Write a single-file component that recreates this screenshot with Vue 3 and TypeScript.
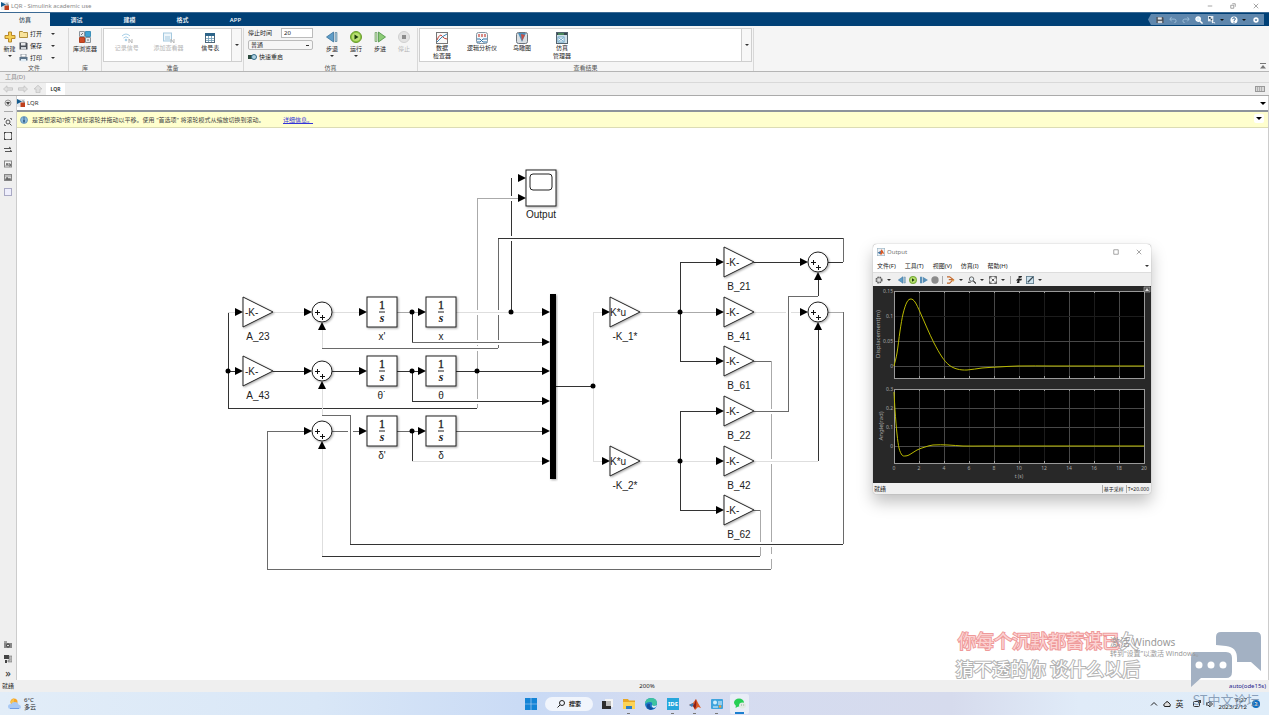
<script setup lang="ts">
import { ref } from 'vue'

type Pt = [number, number]

const tabs = ['仿真', '调试', '建模', '格式', 'APP']
const activeTab = ref('仿真')
const stopTime = ref('20')
const mode = ref('普通')

const fileItems = [
  { icon: 'folder', text: '打开' },
  { icon: 'save', text: '保存' },
  { icon: 'print', text: '打印' },
]
const prepItems = [
  { icon: 'wifi', text: '记录信号', off: true },
  { icon: 'viewer', text: '添加查看器', off: true },
  { icon: 'table', text: '信号表', off: false },
]
const simItems = [
  { icon: 'back', text: '步退', menu: true, off: false },
  { icon: 'run', text: '运行', menu: true, off: false },
  { icon: 'forward', text: '步进', menu: false, off: false },
  { icon: 'stop', text: '停止', menu: false, off: true },
]
const resultItems = [
  { icon: 'inspect', lines: ['数据', '检查器'] },
  { icon: 'logic', lines: ['逻辑分析仪'] },
  { icon: 'bird', lines: ['鸟瞰图'] },
  { icon: 'manager', lines: ['仿真', '管理器'] },
]
const railTop = ['zoomfit', 'fit', 'arrows', 'label', 'image', 'area']
const railBottom = ['camera', 'tree']
const menus = ['文件(F)', '工具(T)', '视图(V)', '仿真(I)', '帮助(H)']

const gains = [
  { x: 243, y: 312, k: '-K-', name: 'A_23' },
  { x: 243, y: 371, k: '-K-', name: 'A_43' },
  { x: 610, y: 312, k: 'K*u', name: '-K_1*' },
  { x: 610, y: 461, k: 'K*u', name: '-K_2*' },
  { x: 724, y: 262, k: '-K-', name: 'B_21' },
  { x: 724, y: 312, k: '-K-', name: 'B_41' },
  { x: 724, y: 361, k: '-K-', name: 'B_61' },
  { x: 724, y: 411, k: '-K-', name: 'B_22' },
  { x: 724, y: 461, k: '-K-', name: 'B_42' },
  { x: 724, y: 510, k: '-K-', name: 'B_62' },
]
const integrators = [
  { x: 367, y: 312, name: "x'" },
  { x: 426, y: 312, name: 'x' },
  { x: 367, y: 371, name: 'θ˙' },
  { x: 426, y: 371, name: 'θ' },
  { x: 367, y: 431, name: "δ'" },
  { x: 426, y: 431, name: 'δ' },
]
const sums: Pt[] = [[322, 312], [322, 371], [322, 431], [818, 262], [818, 312]]

// Wires that are interrupted where another wire crosses them
const brokenWires = [
  { d: 'M477 408V198', tone: 'soft' },
  { d: 'M511 312V178', tone: 'dark' },
  { d: 'M498 348V238', tone: 'mid' },
  { d: 'M771 361V569', tone: 'soft' },
  { d: 'M760 510V556', tone: 'soft' },
  { d: 'M332 431H360', tone: 'mid' },
  { d: 'M754 312H802', tone: 'faint' },
]
const gaps: Pt[] = [
  [511, 198], [511, 238], [477, 312], [477, 342], [477, 348], [477, 401],
  [498, 312], [498, 342], [771, 411], [771, 461], [771, 544], [771, 556],
  [760, 544], [350, 431], [788, 312],
]
const wires = [
  { d: 'M228 312V408H477', tone: 'dark' },
  { d: 'M228 312H236M273 312H305M332 312H360M456 312H543', tone: 'faint' },
  { d: 'M397 312H420', tone: 'soft' },
  { d: 'M477 198H520', tone: 'soft' },
  { d: 'M412 312V342', tone: 'dark' },
  { d: 'M412 342H545M322 348H498', tone: 'mid' },
  { d: 'M322 328V348M322 388V415M322 448V556', tone: 'faint' },
  { d: 'M498 238H843M828 262H843', tone: 'dark' },
  { d: 'M843 238V262M843 312V544', tone: 'mid' },
  { d: 'M228 371H237M273 371H306M332 371H361M397 371H420M456 371H544M412 371V401H544', tone: 'dark' },
  { d: 'M322 415H350V544', tone: 'mid' },
  { d: 'M350 544H843M322 556H760', tone: 'dark' },
  { d: 'M828 312H843', tone: 'soft' },
  { d: 'M306 431H267V569H771M397 431H420M456 431H544', tone: 'mid' },
  { d: 'M412 431V461', tone: 'dark' },
  { d: 'M412 461H543M593 312V461H602M593 312H602M640 461H716M754 461H818', tone: 'faint' },
  { d: 'M556 386H593', tone: 'dark' },
  { d: 'M640 312H718', tone: 'soft' },
  { d: 'M718 262H680V361H718M754 262H802M718 411H680V510H718', tone: 'dark' },
  { d: 'M754 361H771M754 411H788V296H818M754 510H760', tone: 'mid' },
  { d: 'M818 296V278M818 461V328', tone: 'dark' },
]
const rightArrows: Pt[] = [
  [243, 312], [243, 371], [312, 312], [312, 371], [312, 431], [367, 312], [367, 371], [367, 431],
  [426, 312], [426, 371], [426, 431], [550, 312], [550, 342], [550, 371], [550, 401], [550, 431],
  [550, 461], [526, 178], [526, 198], [610, 312], [610, 461], [724, 262], [724, 312], [724, 361],
  [724, 411], [724, 461], [724, 510], [808, 262], [808, 312],
]
const upArrows: Pt[] = [[322, 322], [322, 381], [322, 441], [818, 272], [818, 322]]
const dots: Pt[] = [
  [228, 371], [412, 312], [412, 371], [412, 431], [511, 312], [477, 371], [593, 386], [680, 312], [680, 461],
]

// Cubic Hermite curve through samples with uneven x spacing
function smooth(p: Pt[]): string {
  const slope = p.map((_, i) => {
    const a = p[Math.max(i - 1, 0)]
    const b = p[Math.min(i + 1, p.length - 1)]
    return (b[1] - a[1]) / (b[0] - a[0])
  })
  let d = `M${p[0][0]} ${p[0][1]}`
  for (let i = 0; i < p.length - 1; i++) {
    const [x0, y0] = p[i]
    const [x1, y1] = p[i + 1]
    const h = (x1 - x0) / 3
    d += `C${x0 + h} ${y0 + slope[i] * h} ${x1 - h} ${y1 - slope[i + 1] * h} ${x1} ${y1}`
  }
  return d
}
const displacement = smooth([
  [21, 80], [24, 67], [27, 45], [30, 28], [34, 16], [38, 13], [42, 16], [47, 26], [54, 42], [61, 57],
  [69, 71], [76, 79], [84, 83], [94, 84], [109, 82], [125, 81], [145, 80], [180, 80], [271, 80],
])
const angle = smooth([
  [21, 106], [22, 124], [24, 148], [26, 162], [29, 169], [32, 170], [36, 169], [44, 164], [52, 161],
  [60, 159], [75, 159], [90, 160], [110, 160], [271, 160],
])
const xTicks = Array.from({ length: 11 }, (_, i) => ({ x: 21 + i * 25, label: i * 2 }))
const bright = [2, 4, 8, 14, 18]
const yTop = [{ y: 5, t: '0.15' }, { y: 30, t: '0.1' }, { y: 55, t: '0.05' }, { y: 80, t: '0' }]
const yBottom = [{ y: 103, t: '0.3' }, { y: 122, t: '0.2' }, { y: 141, t: '0.1' }, { y: 160, t: '0' }]
</script>

<template>
  <svg class="defs" aria-hidden="true">
    <symbol id="model" viewBox="0 0 8 8"><rect x="0" y="0" width="8" height="8" fill="#e4e8ec" /><path d="M0 0L5 2.5L0 5Z" fill="#135b8e" /><rect x="3.5" y="3.500" width="4.500" height="4.500" fill="#c0401c" /><path d="M5 2h2v2" stroke="#555" stroke-width=".6" fill="none" /></symbol>
    <symbol id="plus" viewBox="0 0 12 12"><path d="M4.500 1h3v3.500H11v3H7.500V11h-3V7.500H1v-3h3.500z" fill="#f5cf52" stroke="#b9892b" /></symbol>
    <symbol id="folder" viewBox="0 0 9 8"><path d="M.5 1.500h3l1 1h4v5h-8z" fill="#f8e39b" stroke="#b3923f" /></symbol>
    <symbol id="save" viewBox="0 0 9 8"><path d="M.5.5h7l1 1v6h-8z" fill="#4a4f57" /><rect x="2" y="1" width="4.500" height="2.500" fill="#e6e8ea" /><rect x="2" y="5" width="5" height="2.500" fill="#cfd3d8" /></symbol>
    <symbol id="print" viewBox="0 0 9 8"><rect x="2" y="0" width="5" height="3" fill="#fff" stroke="#6c7680" stroke-width=".7" /><rect x=".5" y="3" width="8" height="3.500" fill="#5d7489" /><rect x="2" y="5" width="5" height="2.500" fill="#e1edf5" /></symbol>
    <symbol id="library" viewBox="0 0 12 12"><path d="M.5.5h5v5h-5zM6.500 6.500h5v5h-5z" fill="#e5e9ec" stroke="#8a949c" /><path d="M6.500.5h5v5h-5z" fill="#3fa3d4" stroke="#3b8fb8" /><path d="M.5 6.500h5v5h-5z" fill="#cf4a24" stroke="#b04020" /><path d="M2 4l2-2M8 9h2" stroke="#555" stroke-width=".8" /></symbol>
    <symbol id="wifi" viewBox="0 0 12 12"><path d="M1 4q4-4 8 0M2.500 6q2.500-2.500 5 0" fill="none" stroke="#a9d0e8" /><circle cx="5" cy="8" r="1.300" fill="#a9d0e8" /><path d="M8 7v4M8 7l3 4V7" stroke="#b7b7b7" fill="none" /></symbol>
    <symbol id="viewer" viewBox="0 0 12 12"><rect x=".5" y="1" width="8" height="8" fill="#eef6fb" stroke="#a5c9df" /><path d="M2 5h5M2 7h5" stroke="#a5c9df" /><path d="M8 7v4M8 7l3 4V7" stroke="#b7b7b7" fill="none" /></symbol>
    <symbol id="table" viewBox="0 0 12 12"><rect x="1.500" y="1.500" width="9" height="9" fill="#fff" stroke="#4d667a" /><path d="M1 1h10v3H1z" fill="#2d6489" /><path d="M2 6.500h8M2 8.500h8M4.500 4v6M7.500 4v6" stroke="#6d9ab5" stroke-width=".8" /></symbol>
    <symbol id="back" viewBox="0 0 12 12"><path d="M7.500 1v10L.5 6z" fill="#5e9dc8" stroke="#2c6692" stroke-width=".7" /><path d="M9 1.500h2v9H9z" fill="#a9c8dc" stroke="#4b7896" stroke-width=".6" /></symbol>
    <symbol id="run" viewBox="0 0 12 12"><circle cx="6" cy="6" r="5.500" fill="#8cc63e" stroke="#6a9a31" /><circle cx="6" cy="6" r="4" fill="#b9de74" /><path d="M4.500 3.500v5L8.500 6z" fill="#18380b" /></symbol>
    <symbol id="forward" viewBox="0 0 12 12"><path d="M4.500 1v10l7-5z" fill="#8ccc76" stroke="#3c8737" stroke-width=".7" /><path d="M1 1.500h2v9H1z" fill="#c2dfb4" stroke="#5b9050" stroke-width=".6" /></symbol>
    <symbol id="stop" viewBox="0 0 12 12"><circle cx="6" cy="6" r="5.500" fill="#e3e3e3" stroke="#cfcfcf" /><rect x="4" y="4" width="4" height="4" fill="#8d8d8d" /></symbol>
    <symbol id="restart" viewBox="0 0 9 8"><rect x="0" y="2" width="4" height="4" fill="#2c4a3e" /><circle cx="6" cy="4" r="2.500" fill="#aed0e0" stroke="#326b89" /></symbol>
    <symbol id="inspect" viewBox="0 0 12 12"><rect x=".5" y=".5" width="11" height="11" fill="#fafafa" stroke="#777" /><path d="M1 8q3-7 5-4t5 3" fill="none" stroke="#c54136" /><path d="M1 10l5-5 5-3" fill="none" stroke="#4187b5" /></symbol>
    <symbol id="logic" viewBox="0 0 12 12"><rect x=".5" y=".5" width="11" height="11" rx="2" fill="#f4f7fa" stroke="#8594a0" /><path d="M3 2v3M6 2v3M9 2v3" stroke="#c54136" stroke-width="1.200" /><path d="M1 7h3l3 3h4M1 10h3l3-3h4" fill="none" stroke="#2f75a8" /></symbol>
    <symbol id="bird" viewBox="0 0 12 12"><rect x=".5" y=".5" width="11" height="11" rx="2" fill="#dadfe3" stroke="#6c747b" /><path d="M2 1l4 9 4-9z" fill="#4d90bd" /><path d="M5 2l1 7 3-6z" fill="#c65045" /></symbol>
    <symbol id="manager" viewBox="0 0 12 12"><rect x=".5" y=".5" width="11" height="11" fill="#cfdfe8" stroke="#53636f" /><path d="M1 1h10v2H1z" fill="#39474f" /><path d="M2 2h6" stroke="#58c267" /><rect x="2" y="5" width="6" height="5" fill="#fff" stroke="#3b88b6" stroke-width=".7" /><path d="M3 6l4 3M3 9l4-3" stroke="#3b88b6" stroke-width=".7" /></symbol>
    <symbol id="undo" viewBox="0 0 9 9"><path d="M3 1L1 3.500L3 6M1 3.500h5q2 0 2 2t-2 2" fill="none" stroke="#9fc0da" /></symbol>
    <symbol id="redo" viewBox="0 0 9 9"><path d="M6 1l2 2.500L6 6M8 3.500H3q-2 0-2 2t2 2" fill="none" stroke="#9fc0da" /></symbol>
    <symbol id="search" viewBox="0 0 9 9"><circle cx="3.500" cy="3.500" r="2.500" fill="#d8ecfa" stroke="#fff" stroke-width="1.400" /><path d="M5.500 5.500L8.500 8.500" stroke="#fff" stroke-width="1.600" /></symbol>
    <symbol id="fav" viewBox="0 0 9 9"><rect x="0" y="0" width="6" height="6" fill="#e8edf2" /><path d="M1 1h2v2H1zM3 3h2v2H3z" fill="#2f4a60" /><path d="M5 4v4l1-1 2 1" stroke="#fff" fill="none" /></symbol>
    <symbol id="help" viewBox="0 0 9 9"><circle cx="4.500" cy="4.500" r="4" fill="#fff" /><path d="M3 3.500q0-1.500 1.500-1.500T6 3.500Q6 4.500 4.500 5v1M4.500 7v1" stroke="#24598a" fill="none" /></symbol>
    <symbol id="min" viewBox="0 0 9 9"><circle cx="4.500" cy="4.500" r="3" fill="#fff" /><path d="M3 4h3L4.500 6z" fill="#124a7c" /></symbol>
    <symbol id="left" viewBox="0 0 10 8"><path d="M.5 4L4 .8v2h5.500v2.400H4v2z" fill="#e0e0e0" stroke="#bdbdbd" stroke-width=".7" /></symbol>
    <symbol id="right" viewBox="0 0 10 8"><path d="M9.500 4L6 .8v2H.5v2.400H6v2z" fill="#e0e0e0" stroke="#bdbdbd" stroke-width=".7" /></symbol>
    <symbol id="up" viewBox="0 0 10 8"><path d="M5 .3L9 4H7v3.700H3V4H1z" fill="#e0e0e0" stroke="#bdbdbd" stroke-width=".7" /></symbol>
    <symbol id="keyboard" viewBox="0 0 10 6"><rect x=".5" y=".5" width="9" height="5" fill="#d8d8d8" stroke="#999" /><path d="M2 2h6M2 4h6" stroke="#888" stroke-dasharray="1 1" /></symbol>
    <symbol id="target" viewBox="0 0 8 8"><circle cx="4" cy="4" r="3" fill="#ddd" stroke="#999" /><path d="M2 3h4L4 6z" fill="#444" /></symbol>
    <symbol id="zoomfit" viewBox="0 0 8 8"><path d="M.5 2V.5H2M6 .5h1.500V2M.5 6v1.500H2" stroke="#555" fill="none" stroke-width=".8" /><circle cx="4" cy="4" r="2" stroke="#555" fill="#eee" /><path d="M5.500 5.500l2 2" stroke="#444" /></symbol>
    <symbol id="fit" viewBox="0 0 8 8"><rect x=".5" y=".5" width="7" height="7" fill="#f4f4f4" stroke="#777" /><path d="M0 2V0h2M6 0h2v2M8 6v2H6M2 8H0V6" stroke="#444" fill="none" stroke-width="1.800" /></symbol>
    <symbol id="arrows" viewBox="0 0 8 8"><path d="M0 2.500h7M1 5.500h7M5 1l2 1.500M6 4l2 1.500" stroke="#555" fill="none" /></symbol>
    <symbol id="label" viewBox="0 0 8 8"><rect x=".5" y="1" width="7" height="6" fill="#f5f5f5" stroke="#888" /><path d="M2 6l1-3 1 3M5 3v3h1.500V4H5" stroke="#555" fill="none" stroke-width=".8" /></symbol>
    <symbol id="image" viewBox="0 0 8 8"><rect x=".5" y=".5" width="7" height="6" fill="#ddd" stroke="#888" /><path d="M1 6l2-3 2 2 1-1 1 2zM0 2h8" fill="#666" stroke="#777" stroke-width=".6" /></symbol>
    <symbol id="area" viewBox="0 0 8 8"><rect x=".5" y=".5" width="7" height="7" fill="#eeeefc" stroke="#a9a9c4" /></symbol>
    <symbol id="camera" viewBox="0 0 8 8"><path d="M0 2h8v5H0z" fill="#888" /><circle cx="4" cy="4.500" r="1.500" fill="#ddd" stroke="#333" /><path d="M0 1h3" stroke="#555" /></symbol>
    <symbol id="tree" viewBox="0 0 8 8"><path d="M0 0h5v4H0zM1 5h2v3H1z" fill="#444" /><path d="M5 1h3v6H4V5h2z" fill="#bbb" stroke="#777" stroke-width=".6" /></symbol>
    <symbol id="matlab" viewBox="0 0 12 12"><path d="M0 7l4-2 3-4 2 4 3 5-3-1-3 3-2-4z" fill="#dc5a25" /><path d="M0 7l4-2 1 2-2 2z" fill="#3d7db5" /><path d="M7 1q-1 5-3 7l2 3q2-3 1-10z" fill="#8f2117" /></symbol>
    <symbol id="scopeicon" viewBox="0 0 12 12"><rect x=".5" y=".5" width="11" height="11" fill="#eaf1f6" stroke="#9db4c4" /><path d="M1 7l4-2 2-3 2 3 2 4-3-1-2 3-2-3z" fill="#dc5a25" /><path d="M1 7l4-2 1 2-2 2z" fill="#3d7db5" /></symbol>
    <symbol id="gear" viewBox="0 0 9 9"><circle cx="4.500" cy="4.500" r="3" fill="#eee" stroke="#555" stroke-dasharray="1.600 .8" stroke-width="2" /><circle cx="4.500" cy="4.500" r="2.500" fill="#ddd" stroke="#666" stroke-width=".6" /></symbol>
    <symbol id="trigger" viewBox="0 0 9 9"><path d="M0 1h3l4 3-4 4H0M2 4h6" fill="none" stroke="#c36a2e" stroke-width="1.300" /><circle cx="7" cy="5" r="1.200" fill="#e1a253" /></symbol>
    <symbol id="zoom" viewBox="0 0 9 9"><circle cx="4" cy="3.500" r="2.500" fill="#e5eef3" stroke="#555" /><path d="M6 5.500l3 3M0 7h3" stroke="#333" stroke-width="1.200" /></symbol>
    <symbol id="expand" viewBox="0 0 9 9"><rect x=".5" y=".5" width="8" height="8" fill="#f4f4f4" stroke="#888" /><path d="M1 3V1h2M6 1h2v2M8 6v2H6M3 8H1V6M3 3l3 3M6 3L3 6" stroke="#444" fill="none" /></symbol>
    <symbol id="bolt" viewBox="0 0 9 9"><path d="M4 0h4L7 2H5v1h3L7 5H5v3H2l1-3H1l2-2h1z" fill="#222" /></symbol>
    <symbol id="measure" viewBox="0 0 9 9"><rect x=".5" y=".5" width="8" height="8" fill="#cfe3ee" stroke="#637f90" /><path d="M2 7L8 1" stroke="#3c4a54" stroke-width="1.500" /></symbol>
    <symbol id="info" viewBox="0 0 8 8"><circle cx="4" cy="4" r="3.500" fill="#8dbbdc" stroke="#4e86b2" stroke-width=".7" /><path d="M4 1.500v1M4 3.500v3" stroke="#153f66" stroke-width="1.300" /></symbol>
    <symbol id="win" viewBox="0 0 12 12"><path d="M0 0h5.700v5.700H0zM6.300 0H12v5.700H6.300zM0 6.300h5.700V12H0zM6.300 6.300H12V12H6.300z" fill="#1484d6" /></symbol>
    <symbol id="desks" viewBox="0 0 12 12"><rect x="4" y="1" width="8" height="8" fill="#f4f4f4" /><path d="M1 3h4v5h5v3H1z" fill="#2d2d2d" /><rect x="5" y="3" width="5" height="5" fill="#bdbdbd" /></symbol>
    <symbol id="explorer" viewBox="0 0 12 12"><path d="M0 1h5l1 1.500h6V11H0z" fill="#e8a723" /><path d="M0 4h12v7H0z" fill="#fcd355" /><path d="M3 8h6v3H3z" fill="#2d7fc4" /></symbol>
    <symbol id="edge" viewBox="0 0 12 12"><circle cx="6" cy="6" r="6" fill="#1b78c8" /><path d="M0 6Q0 0 6 0t6 5q0 3-3 3-2 0-2-1 1-3-2-3-3 0-5 2z" fill="#3fc3a1" /><path d="M5 6q-1 4 4 4-2 2-4 1.800Q1 10 2 7q1-2 3-1z" fill="#154f9c" /><path d="M7 7q1 1 2 1t3-1q-1 3-3 3-3-1-2-3z" fill="#dcebf9" /></symbol>
    <symbol id="control" viewBox="0 0 12 12"><rect x="0" y="1" width="12" height="10" rx="1" fill="#3fa4dd" /><circle cx="4" cy="4.500" r="2" fill="#cfeefc" /><path d="M7 4h4M7 6h4M2 9h5" stroke="#e8f6ff" /><circle cx="9" cy="8.500" r="1.300" fill="#eaa23e" /></symbol>
    <symbol id="wechat" viewBox="0 0 12 12"><ellipse cx="5" cy="4.500" rx="5" ry="4" fill="#27cf55" /><path d="M2 7l-.5 3L5 8z" fill="#27cf55" /><ellipse cx="8.500" cy="7.500" rx="3.500" ry="3" fill="#e3ebe5" /><path d="M7 7h.8M9.300 7h.8" stroke="#7f9484" /></symbol>
    <symbol id="weather" viewBox="0 0 13 12"><circle cx="6" cy="4" r="3.500" fill="#f5a52b" /><path d="M6 0L2 4l4 3z" fill="#f8c44c" /><path d="M3 11q-3 0-3-2.500T3 6q1-2 4-2 3 0 3.500 2.500Q13 7 13 9t-2.500 2z" fill="#a9c9f5" /><path d="M2 10.500h9" stroke="#6f9de6" /></symbol>
  </svg>

  <div class="app">
    <header class="title">
      <svg class="i8"><use href="#model" /></svg>
      <h1>LQR - Simulink academic use</h1>
      <div class="winbtns">
        <button aria-label="最小化"><svg viewBox="0 0 8 8"><path d="M1 4h6" /></svg></button>
        <button aria-label="还原"><svg viewBox="0 0 8 8"><path d="M1 3h4v4H1zM3 1h4v4" /></svg></button>
        <button aria-label="关闭"><svg viewBox="0 0 8 8"><path d="M1 1l6 6M7 1L1 7" /></svg></button>
      </div>
    </header>

    <nav class="tabs">
      <button v-for="t in tabs" :key="t" :class="{ on: t === activeTab }" @click="activeTab = t">{{ t }}</button>
      <div class="quick">
        <button aria-label="保存"><svg><use href="#save" /></svg></button>
        <button aria-label="撤销"><svg><use href="#undo" /></svg></button>
        <button aria-label="重做"><svg><use href="#redo" /></svg></button>
        <button aria-label="搜索"><svg><use href="#search" /></svg></button>
        <button class="wide" aria-label="收藏夹"><svg><use href="#fav" /></svg><i class="caret" /></button>
        <button class="wide" aria-label="帮助"><svg><use href="#help" /></svg><i class="caret" /></button>
        <button aria-label="折叠"><svg><use href="#min" /></svg></button>
      </div>
    </nav>

    <section class="ribbon">
      <div class="group g-file">
        <div class="row">
          <button class="big"><svg><use href="#plus" /></svg><span>新建</span><i class="caret" /></button>
          <div class="stack">
            <button v-for="f in fileItems" :key="f.text" class="small"><svg><use :href="'#' + f.icon" /></svg><span>{{ f.text }}</span><i class="caret" /></button>
          </div>
        </div>
        <p>文件</p>
      </div>
      <div class="group g-lib">
        <div class="row"><button class="big"><svg><use href="#library" /></svg><span>库浏览器</span></button></div>
        <p>库</p>
      </div>
      <div class="group g-prep">
        <div class="gallery">
          <button v-for="p in prepItems" :key="p.text" class="big" :class="{ off: p.off }"><svg><use :href="'#' + p.icon" /></svg><span>{{ p.text }}</span></button>
          <button class="more" aria-label="更多"><i class="caret" /></button>
        </div>
        <p>准备</p>
      </div>
      <div class="group g-sim">
        <div class="row">
          <div class="params">
            <label>停止时间<input v-model="stopTime" /></label>
            <select v-model="mode" aria-label="仿真模式"><option>普通</option></select>
            <button class="fast"><svg><use href="#restart" /></svg>快速重启</button>
          </div>
          <button v-for="s in simItems" :key="s.text" class="big" :class="{ off: s.off }"><svg><use :href="'#' + s.icon" /></svg><span>{{ s.text }}</span><i v-if="s.menu" class="caret" /></button>
        </div>
        <p>仿真</p>
      </div>
      <div class="group g-res">
        <div class="gallery">
          <button v-for="r in resultItems" :key="r.icon" class="big"><svg><use :href="'#' + r.icon" /></svg><span v-for="l in r.lines" :key="l">{{ l }}</span></button>
          <button class="more" aria-label="更多"><i class="caret" /></button>
        </div>
        <p>查看结果</p>
      </div>
      <button class="collapse" aria-label="折叠工具条"><svg viewBox="0 0 6 6"><path d="M0 .5h6" stroke="#777" /><path d="M0 5.500L3 2l3 3.500z" fill="#777" /></svg></button>
    </section>

    <div class="tools">工具(D)</div>
    <div class="docs">
      <button aria-label="后退"><svg><use href="#left" /></svg></button>
      <button aria-label="前进"><svg><use href="#right" /></svg></button>
      <button aria-label="向上"><svg><use href="#up" /></svg></button>
      <button class="doc">LQR</button>
      <button class="kb" aria-label="键盘"><svg><use href="#keyboard" /></svg></button>
    </div>

    <div class="body">
      <aside class="rail">
        <button aria-label="隐藏浏览器"><svg><use href="#target" /></svg></button>
        <hr />
        <button v-for="r in railTop" :key="r" :aria-label="r"><svg><use :href="'#' + r" /></svg></button>
        <span class="grow" />
        <button v-for="r in railBottom" :key="r" :aria-label="r"><svg><use :href="'#' + r" /></svg></button>
        <button class="chev">»</button>
      </aside>
      <main>
        <div class="path"><svg class="i8"><use href="#model" /></svg><a href="#lqr">LQR</a><button aria-label="路径"><i class="caret big-caret" /></button></div>
        <div class="notice">
          <svg class="i8"><use href="#info" /></svg>
          <span>是否想滚动?按下鼠标滚轮并拖动以平移。使用 "首选项" 将滚轮模式从缩放切换到滚动。</span>
          <a href="#more">详细信息。</a>
          <button aria-label="选项"><i class="caret big-caret" /></button>
        </div>
        <div class="canvas">
          <svg class="diagram" width="850" height="460" viewBox="17 128 850 460">
            <defs>
              <filter id="sh" x="-20%" y="-20%" width="150%" height="150%"><feDropShadow dx="1" dy="1" stdDeviation="0.8" flood-opacity=".35" /></filter>
            </defs>
            <g class="wire">
              <path v-for="w in brokenWires" :key="w.d" :d="w.d" :class="w.tone" />
            </g>
            <rect v-for="g in gaps" :key="g.join()" :x="g[0] - 2" :y="g[1] - 2" width="5" height="5" fill="#fff" />
            <g class="wire">
              <path v-for="w in wires" :key="w.d" :d="w.d" :class="w.tone" />
            </g>
            <path v-for="a in rightArrows" :key="'r' + a.join()" :d="`M${a[0]} ${a[1]}l-8 -4v8z`" />
            <path v-for="a in upArrows" :key="'u' + a.join()" :d="`M${a[0]} ${a[1]}l-4 8h8z`" />
            <circle v-for="d in dots" :key="'d' + d.join()" :cx="d[0]" :cy="d[1]" r="2.500" />
            <g v-for="g in gains" :key="g.name">
              <path class="block" :d="`M${g.x} ${g.y - 15}l30 15l-30 15z`" />
              <text :x="g.k === 'K*u' ? g.x : g.x + 2" :y="g.y + 4">{{ g.k }}</text>
              <text class="mid-text" :x="g.x + 15" :y="g.y + 28">{{ g.name }}</text>
            </g>
            <g v-for="n in integrators" :key="n.name">
              <rect class="block" :x="n.x" :y="n.y - 15" width="30" height="30" />
              <text class="frac one" :x="n.x + 15" :y="n.y - 3">1</text>
              <path :d="`M${n.x + 12} ${n.y}h6`" stroke="#222" />
              <text class="frac it" :x="n.x + 15" :y="n.y + 10">s</text>
              <text class="mid-text" :x="n.x + 15" :y="n.y + 28">{{ n.name }}</text>
            </g>
            <g v-for="s in sums" :key="'s' + s.join()">
              <circle class="block" :cx="s[0]" :cy="s[1]" r="10" />
              <path class="plus" :d="`M${s[0] - 7} ${s[1]}h5M${s[0] - 5} ${s[1] - 2}v5M${s[0] - 2} ${s[1] + 5}h5M${s[0]} ${s[1] + 3}v5`" />
            </g>
            <rect x="550" y="294" width="6" height="185" filter="url(#sh)" />
            <rect class="block" x="526" y="170" width="30" height="36" />
            <rect x="530" y="174" width="22" height="16" rx="3" fill="#fff" stroke="#222" />
            <text class="mid-text" x="541" y="218">Output</text>
          </svg>

          <section class="scope">
            <header><svg class="i8"><use href="#scopeicon" /></svg><h2>Output</h2>
              <button aria-label="最大化"><svg viewBox="0 0 8 8"><path d="M1 1h6v6H1z" /></svg></button>
              <button aria-label="关闭"><svg viewBox="0 0 8 8"><path d="M1 1l6 6M7 1L1 7" /></svg></button>
            </header>
            <nav><button v-for="m in menus" :key="m">{{ m }}</button><i class="caret" /></nav>
            <div class="scopebar">
              <button class="drop" aria-label="配置"><svg><use href="#gear" /></svg><i class="caret" /></button>
              <button class="first" aria-label="步退"><svg><use href="#back" /></svg></button>
              <button aria-label="运行"><svg><use href="#run" /></svg></button>
              <button aria-label="步进"><svg viewBox="0 0 12 12"><path d="M4 1v10l8-5zM0 1h3v10H0z" fill="#5b91b8" /></svg></button>
              <button aria-label="停止"><svg viewBox="0 0 12 12"><circle cx="6" cy="6" r="5.500" fill="#8c8c8c" /></svg></button>
              <button class="drop line" aria-label="触发"><svg><use href="#trigger" /></svg><i class="caret" /></button>
              <button class="drop" aria-label="缩放"><svg><use href="#zoom" /></svg><i class="caret" /></button>
              <button class="drop" aria-label="适应"><svg><use href="#expand" /></svg><i class="caret" /></button>
              <button class="line" aria-label="突出显示"><svg><use href="#bolt" /></svg></button>
              <button class="drop" aria-label="测量"><svg><use href="#measure" /></svg><i class="caret" /></button>
            </div>
            <svg class="plot" viewBox="0 0 278 197">
              <rect width="278" height="197" fill="#282828" />
              <rect x="21" y="5" width="250" height="87" fill="#000" />
              <rect x="21" y="103" width="250" height="74" fill="#000" />
              <g class="grid">
                <path v-for="t in xTicks" :key="'g' + t.x" :d="`M${t.x} 5V92M${t.x} 103V177`" :class="{ hi: bright.includes(t.label) }" />
                <path v-for="t in xTicks" :key="'k' + t.x" class="tick" :d="`M${t.x} 5v2M${t.x} 90v2M${t.x} 103v2M${t.x} 175v2`" />
                <path class="hi" d="M21 55H271M21 80H271M21 122H271M21 141H271M21 160H271" />
                <path d="M21 30H271" />
                <rect class="frame" x="21" y="5" width="250" height="87" />
                <rect class="frame" x="21" y="103" width="250" height="74" />
              </g>
              <path class="curve" :d="displacement" />
              <path class="curve" :d="angle" />
              <g class="nums">
                <text v-for="t in yTop" :key="'a' + t.y" x="20" :y="t.y + 2" text-anchor="end">{{ t.t }}</text>
                <text v-for="t in yBottom" :key="'b' + t.y" x="20" :y="t.y + 2" text-anchor="end">{{ t.t }}</text>
                <text v-for="t in xTicks" :key="'x' + t.x" :x="t.x" y="184" text-anchor="middle">{{ t.label }}</text>
                <text x="146" y="192" text-anchor="middle">t (s)</text>
                <text class="axis" transform="translate(7 48) rotate(-90)" text-anchor="middle">Displacement(m)</text>
                <text class="axis" transform="translate(10 140) rotate(-90)" text-anchor="middle">Angle(rad)</text>
              </g>
              <path d="M271 1h6v5h-6z" fill="#555" stroke="#bbb" stroke-width=".6" /><path d="M272 5l2-3 2 3z" fill="#ddd" />
            </svg>
            <footer><span>就绪</span><span class="cell">基于采样</span><span class="cell">T=20.000</span></footer>
          </section>
        </div>
      </main>
    </div>

    <footer class="status"><span>就绪</span><span>200%</span><span class="solver">auto(ode15s)</span></footer>

    <footer class="taskbar">
      <div class="weather"><svg><use href="#weather" /></svg><div><span>6°C</span><span>多云</span></div></div>
      <div class="apps">
        <button aria-label="开始"><svg><use href="#win" /></svg></button>
        <button class="find"><svg viewBox="0 0 8 8"><circle cx="5" cy="3" r="2.500" fill="none" stroke="#222" /><path d="M3 5L.5 7.500" stroke="#222" /></svg>搜索</button>
        <button aria-label="任务视图"><svg><use href="#desks" /></svg></button>
        <button class="open" aria-label="文件资源管理器"><svg><use href="#explorer" /></svg></button>
        <button aria-label="Edge"><svg><use href="#edge" /></svg></button>
        <button class="open"><span class="ide">IDE</span></button>
        <button class="open" aria-label="MATLAB"><svg><use href="#matlab" /></svg></button>
        <button class="open" aria-label="控制面板"><svg><use href="#control" /></svg></button>
        <button class="open current" aria-label="微信"><svg><use href="#wechat" /></svg></button>
      </div>
      <div class="tray">
        <svg viewBox="0 0 8 8"><path d="M1 5.500l3-3 3 3" fill="none" stroke="#222" /></svg>
        <svg viewBox="0 0 8 8"><path d="M1 6Q0 4 2 3.500 4 0 6 3q2 1 1 3.500H2z" fill="#ddd" stroke="#222" /></svg>
        <span class="ime">英</span>
        <svg class="net" viewBox="0 0 8 8"><rect x=".5" y="1.500" width="6" height="5" rx="1" fill="none" stroke="#333" /><path d="M5 0h3v3H5z" fill="#333" /></svg>
        <svg viewBox="0 0 8 8"><path d="M0 3h2l2-2v6L2 5H0zM5.500 2.500q1.500 1.500 0 3" fill="none" stroke="#333" /></svg>
        <div class="clock"><span>9:27</span><span>2023/2/12</span></div>
        <b>2</b>
      </div>
    </footer>

    <div class="lyrics"><span class="pink">你每个沉默都蓄谋已</span><span>久</span><br /><span>猜不透的你 谈什么以后</span></div>
    <div class="forum">
      <svg viewBox="0 0 72 56"><path d="M31 0h35q5 0 5 5v34L61 30H47v-4q0-11-11-12l-10-1V5q0-5 5-5z" fill="#a3b1c3" /><path d="M6 20h30q6 0 6 6v14q0 6-6 6H11L1 55V26q0-6 5-6z" fill="#a3b1c3" /><g fill="#fff"><circle cx="9" cy="33" r="3.500" /><circle cx="21" cy="33" r="3.500" /><circle cx="33" cy="33" r="3.500" /></g></svg>
      <span>ST中文论坛</span>
    </div>
    <div class="activate"><span>激活 Windows</span><small>转到“设置”以激活 Windows。</small></div>
  </div>
</template>

<style>
html, body { margin: 0; height: 100%; }
#app { height: 100%; }
</style>

<style scoped>
* { box-sizing: border-box; }
.defs { position: absolute; width: 0; height: 0; }
.app { position: relative; height: 100vh; display: flex; flex-direction: column; overflow: hidden; background: #fff; color: #222; font: 6px/8px "Noto Sans", "Noto Sans CJK SC", sans-serif; }
button { display: flex; align-items: center; justify-content: center; padding: 0; border: 0; background: none; font: inherit; color: inherit; white-space: nowrap; }
h1, h2, p { margin: 0; font: inherit; }
svg { display: block; flex: none; }
.i8 { width: 8px; height: 8px; }
.caret { width: 0; height: 0; border: 2px solid transparent; border-top-color: #333; border-bottom: 0; flex: none; }
.big-caret { border-width: 3px; border-bottom: 0; border-top-color: #000; }

.title { display: flex; align-items: center; height: 12px; padding-left: 1px; gap: 2px; color: #888; flex: none; }
.winbtns { margin-left: auto; display: flex; gap: 7px; padding-right: 5px; }
.winbtns button { width: 16px; }
.winbtns svg, .scope header button svg { width: 6px; height: 6px; fill: none; stroke: #888; }

.tabs { display: flex; height: 14px; flex: none; background: #004076; border-top: 1px solid #3c6a94; padding-right: 5px; }
.tabs > button { width: 53px; color: #fff; font-weight: 500; }
.tabs > button:first-child { width: 50px; }
.tabs > button.on { background: #f5f5f5; color: #456; }
.quick { margin: 1px 0 1px auto; width: 116px; display: flex; align-items: center; background: #5f87ad; padding-left: 5px; clip-path: polygon(3px 0, 100% 0, 100% 100%, 3px 100%, 0 50%); }
.quick button { width: 13px; }
.quick .wide { width: 22px; gap: 4px; }
.quick svg { width: 8px; height: 8px; }
.quick .caret { border-top-color: #111; }

.ribbon { display: flex; height: 46px; flex: none; background: #f5f5f5; border-bottom: 1px solid #b5b5b5; padding-top: 2px; }
.group { display: flex; flex-direction: column; border-right: 1px solid #d8d8d8; }
.group p { height: 9px; flex: none; text-align: center; line-height: 12px; color: #555; }
.row { display: flex; height: 34px; flex: none; }
.g-file { width: 69px; }
.g-lib { width: 33px; }
.g-prep { width: 142px; }
.g-sim { width: 174px; }
.g-res { width: 336px; }
.big { flex-direction: column; justify-content: flex-start; width: 24px; padding-top: 3px; }
.big svg { width: 12px; height: 12px; margin-bottom: 2px; }
.big.off { color: #b5b5b5; }
.big .caret { margin-top: 2px; }
.g-file .big { width: 19px; }
.g-lib .big { width: 32px; }
.gallery .big svg { margin-bottom: 0; }
.stack { display: flex; flex-direction: column; }
.small { height: 12px; gap: 2px; flex: none; justify-content: flex-start; }
.small svg { width: 9px; height: 8px; }
.small .caret { margin-left: 7px; }
.gallery { height: 34px; flex: none; margin: 0 1px; display: flex; background: #fff; border: 1px solid #cfcfcf; padding-left: 2px; }
.gallery .big { width: 42px; }
.g-res .gallery .big { width: 40px; }
.more { margin-left: auto; width: 10px; border-left: 1px solid #cfcfcf; background: #f7f7f7; }
.params { width: 76px; padding-left: 4px; display: flex; flex-direction: column; gap: 2px; align-items: flex-start; }
.params label { display: flex; width: 65px; justify-content: space-between; align-items: center; }
.params input, .params select { height: 10px; font: inherit; border: 1px solid #bbb; background: #fff; padding: 0 2px; color: #222; }
.params input { width: 32px; }
.params select { width: 65px; appearance: none; border-radius: 2px; background: linear-gradient(#333, #333) 57px 4px / 3px 1px no-repeat, #f6f6f6; line-height: 8px; }
.fast { gap: 2px; height: 10px; }
.fast svg { width: 9px; height: 8px; }
.collapse { margin: auto 3px 2px auto; }
.collapse svg { width: 6px; height: 6px; }

.tools { height: 11px; flex: none; background: #efefef; border-bottom: 1px solid #d9d9d9; padding-left: 5px; line-height: 10px; color: #888; }
.docs { height: 13px; flex: none; display: flex; background: #efefef; border-bottom: 1px solid #aaa; padding-left: 3px; gap: 5px; }
.docs svg { width: 10px; height: 8px; }
.docs .doc { width: 19px; margin-left: -2px; background: #fff; font-size: 5px; font-weight: 600; }
.docs .kb { margin-left: auto; margin-right: 4px; }

.body { flex: 1; display: flex; min-height: 0; }
.rail { width: 17px; flex: none; background: #efefef; border-right: 1px solid #ccc; display: flex; flex-direction: column; align-items: center; }
.rail button { height: 14px; flex: none; }
.rail svg { width: 8px; height: 8px; }
.rail hr { width: 9px; margin: 1px 0 3px; border: 0; border-top: 1px solid #aaa; }
.grow { flex: 1; }
.chev { font-size: 11px; color: #333; }
main { flex: 1; min-width: 0; display: flex; flex-direction: column; border-right: 1px solid #ccc; }
.path { height: 16px; flex: none; display: flex; align-items: center; gap: 2px; border-bottom: 2px solid #8d949b; }
.path a { color: #333; text-decoration: none; }
.path button { margin-left: auto; padding-right: 2px; }
.notice { height: 16px; flex: none; display: flex; align-items: center; gap: 4px; padding-left: 3px; background: #ffffce; border-bottom: 1px solid #dcdcb4; color: #444; }
.notice span { min-width: 247px; }
.notice a { color: #3434d8; }
.notice button { margin: 0 4px 3px auto; width: 10px; height: 9px; background: #fff; border-radius: 2px; }
.canvas { position: relative; flex: 1; min-height: 0; background: #fff; }

.diagram text { font: 10px "Liberation Sans", sans-serif; fill: #222; }
.diagram .mid-text { text-anchor: middle; }
.diagram .frac { font: bold 12px "Liberation Serif", serif; text-anchor: middle; }
.diagram .one { font-weight: normal; stroke: #222; stroke-width: .3; }
.diagram .it { font-style: italic; }
.plus { fill: none; stroke: #111; shape-rendering: crispEdges; }
.wire { fill: none; stroke-width: 1; shape-rendering: crispEdges; }
.dark { stroke: #333; }
.mid { stroke: #6a6a6a; }
.soft { stroke: #aaa; }
.faint { stroke: #dedede; }
.block { fill: #fff; stroke: #222; filter: url(#sh); }

.scope { position: absolute; left: 856px; top: 116px; width: 278px; display: flex; flex-direction: column; background: #fff; border-radius: 4px; overflow: hidden; box-shadow: 0 0 1px #777, 0 8px 16px rgba(0, 0, 0, .25); }
.scope header { height: 15px; display: flex; align-items: center; padding: 0 8px 0 4px; gap: 2px; color: #777; }
.scope h2 { margin-right: auto; }
.scope header button { width: 8px; margin-left: 13px; }
.scope nav { height: 13px; display: flex; align-items: center; gap: 9px; padding: 0 2px 0 4px; }
.scope nav .caret { margin-left: auto; }
.scopebar { height: 14px; background: #efefef; border-top: 1px solid #ddd; display: flex; align-items: center; padding-left: 2px; gap: 3px; }
.scopebar svg { width: 8px; height: 8px; }
.scopebar .first { margin-left: 2px; }
.drop { gap: 4px; margin-right: 2px; }
.line { border-left: 1px solid #aaa; padding-left: 4px; }
.plot { width: 100%; height: 197px; }
.grid { fill: none; stroke: #1c1c1c; shape-rendering: crispEdges; }
.grid .hi { stroke: #484848; }
.grid .frame, .grid .tick { stroke: #999; }
.curve { fill: none; stroke: #b9b900; }
.nums { font: 5px "Noto Sans", sans-serif; fill: #aaa; }
.axis { font-size: 6px; }
.scope footer { height: 11px; display: flex; background: #f0f0f0; align-items: center; padding: 0 2px 0 1px; gap: 2px; }
.scope footer span:first-child { margin-right: auto; }
.cell { border-left: 1px solid #aaa; padding-left: 1px; font-size: 5px; }

.status { height: 12px; flex: none; background: #efefef; display: grid; grid-template-columns: 1fr auto 1fr; align-items: center; padding: 0 3px 0 2px; }
.status span:nth-child(2) { padding-left: 26px; }
.solver { text-align: right; color: #22228c; }
.taskbar { height: 23px; flex: none; display: grid; grid-template-columns: 1fr auto 1fr; align-items: center; background: linear-gradient(90deg, #e2edf8, #d9e7f7 25%, #c9daf5 42%, #d5dcf1 52%, #d6dbed 75%, #e0ebf8 85%, #dfedf9); }
.weather { display: flex; padding-left: 8px; gap: 3px; align-items: center; }
.weather svg { width: 13px; height: 12px; }
.weather span { display: block; line-height: 7px; }
.apps { display: flex; align-items: center; height: 23px; }
.apps button { position: relative; width: 22px; height: 20px; }
.apps svg { width: 12px; height: 12px; }
.apps .find { width: 48px; height: 14px; margin: 0 3px; gap: 4px; border-radius: 7px; background: #f1f5fc; font-weight: 600; }
.apps .find svg { width: 8px; height: 8px; }
.apps .open::after { content: ""; position: absolute; bottom: 0; left: 9px; width: 3px; height: 1px; background: #777; }
.apps .current { width: 19px; margin-left: 2px; background: #e9edf7; border-radius: 2px; }
.apps .current::after { left: 5px; width: 9px; height: 2px; background: #1b7fd0; }
.ide { width: 12px; height: 12px; background: #26a6dc; color: #fff; font-weight: 700; line-height: 12px; }
.tray { display: flex; justify-content: flex-end; align-items: center; gap: 5px; padding-right: 9px; }
.tray svg { width: 8px; height: 8px; }
.ime { font-size: 8px; }
.tray .net { margin-left: 4px; }
.clock { text-align: right; }
.clock span { display: block; line-height: 7px; }
.tray b { width: 8px; height: 8px; border-radius: 4px; background: #0b6fc2; color: #fff; text-align: center; font-size: 5px; }

.activate { position: absolute; right: 60px; bottom: 57px; width: 99px; color: #999; white-space: nowrap; }
.activate span { display: block; font-size: 10px; line-height: 14px; }
.activate small { display: block; font-size: 7px; line-height: 9px; }
.lyrics { position: absolute; right: 126px; bottom: 33px; width: 187px; font: 18px/28px "Noto Sans CJK SC", sans-serif; color: #fff; -webkit-text-stroke: 2px #b3b3b3; paint-order: stroke fill; white-space: nowrap; }
.lyrics .pink { color: #fbd3d3; -webkit-text-stroke-color: #ef9a9a; margin-left: 2px; }
.forum { position: absolute; right: 7px; bottom: 6px; width: 72px; color: rgba(110, 135, 165, .75); font: 13px/18px "Noto Sans CJK SC", sans-serif; white-space: nowrap; }
.forum svg { width: 72px; height: 56px; margin-bottom: 3px; }
.forum span { display: block; text-align: center; }
</style>
